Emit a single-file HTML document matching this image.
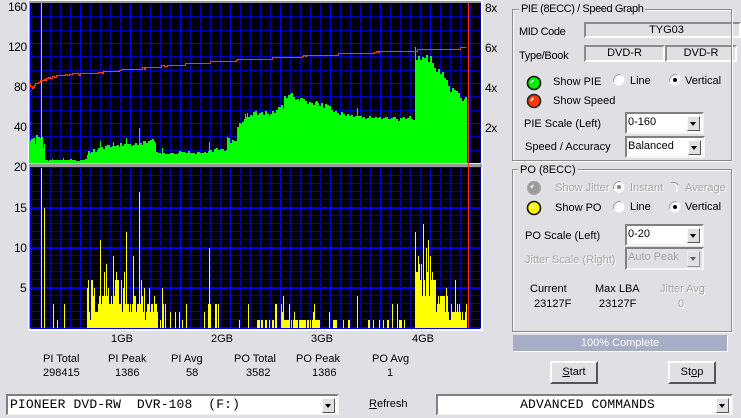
<!DOCTYPE html>
<html><head><meta charset="utf-8"><style>
html,body{margin:0;padding:0;background:#E0DFE3;width:741px;height:418px;overflow:hidden}
#p{position:relative;width:741px;height:418px;overflow:hidden;background:#E0DFE3}
.t{position:absolute;font:11px/14px "Liberation Sans",sans-serif;color:#000;white-space:nowrap}
.a{font-size:12px;letter-spacing:-.4px}
.d{color:#a4a4a6;text-shadow:1px 1px 0 #fff}
.g{position:absolute;border:1px solid #8a8a8c;box-shadow:1px 1px 0 #fff, inset 1px 1px 0 #fff}
.l{background:#E0DFE3;padding:0 2px}
.f{position:absolute;box-sizing:border-box;border:2px solid;border-color:#8c8c8c #fff #fff #8c8c8c;text-align:center;font:11px/13px "Liberation Sans",sans-serif}
.c{position:absolute;box-sizing:border-box;background:#fff;border:2px solid;border-color:#808080 #f4f4f4 #f4f4f4 #808080;font:11px/17px "Liberation Sans",sans-serif;padding-left:1px;white-space:nowrap;overflow:hidden}
.c i{position:absolute;right:2px;top:2px;bottom:1px;width:13px;box-sizing:border-box;background:#E0DFE3;border:1px solid;border-color:#f8f8f8 #555 #555 #f8f8f8}
.c i:after{content:"";position:absolute;left:2px;top:5px;border:3.5px solid transparent;border-top:4px solid #000;border-bottom:0}
.m{font-family:"Liberation Mono",monospace;font-size:13px;letter-spacing:.13px}
.b{position:absolute;box-sizing:border-box;width:48px;height:23px;background:#E0DFE3;border:2px solid;border-color:#fff #555 #555 #fff;text-align:center;font:11px/18px "Liberation Sans",sans-serif}
svg{position:absolute;left:0;top:0}
</style></head><body><div id="p">

<svg width="741" height="418" shape-rendering="crispEdges">
<rect x="28" y="0" width="455" height="331" fill="#fff"/>
<rect x="29" y="1" width="452" height="3" fill="#9a9a9a"/>
<rect x="29" y="1" width="1" height="328" fill="#9a9a9a"/>
<rect x="30" y="3" width="451" height="160" fill="#000"/>
<rect x="29" y="163" width="453" height="4" fill="#9a9a9a"/>
<rect x="29" y="163" width="453" height="1" fill="#e8e8e8"/>
<rect x="30" y="167" width="451" height="161" fill="#000"/>
<g fill="none" stroke-width="1" transform="translate(.5 .5)">
<path stroke="#0000b4" d="M30 16H480M30 30H480M30 56H480M30 70H480M30 96H480M30 110H480M30 136H480M30 150H480M30 175H480M30 183H480M30 191H480M30 199H480M30 215H480M30 223H480M30 231H480M30 239H480M30 255H480M30 263H480M30 271H480M30 279H480M30 295H480M30 303H480M30 311H480M30 319H480"/>
<path stroke="#0000b4" d="M40 3V162M50 3V162M60 3V162M70 3V162M90 3V162M100 3V162M110 3V162M120 3V162M140 3V162M150 3V162M160 3V162M170 3V162M190 3V162M200 3V162M210 3V162M220 3V162M240 3V162M250 3V162M260 3V162M270 3V162M290 3V162M300 3V162M310 3V162M320 3V162M340 3V162M350 3V162M360 3V162M370 3V162M390 3V162M400 3V162M410 3V162M420 3V162M440 3V162M450 3V162M460 3V162M470 3V162M480 3V162"/>
<path stroke="#0000b4" d="M40 167V327M50 167V327M60 167V327M70 167V327M90 167V327M100 167V327M110 167V327M120 167V327M140 167V327M150 167V327M160 167V327M170 167V327M190 167V327M200 167V327M210 167V327M220 167V327M240 167V327M250 167V327M260 167V327M270 167V327M290 167V327M300 167V327M310 167V327M320 167V327M340 167V327M350 167V327M360 167V327M370 167V327M390 167V327M400 167V327M410 167V327M420 167V327M440 167V327M450 167V327M460 167V327M470 167V327M480 167V327"/>
<path stroke="#0000f0" d="M30 3V162M80 3V162M130 3V162M180 3V162M230 3V162M280 3V162M330 3V162M380 3V162M430 3V162M30 167V327M80 167V327M130 167V327M180 167V327M230 167V327M280 167V327M330 167V327M380 167V327M430 167V327"/>
<path stroke="#0000f0" d="M30 43H480M30 83H480M30 123H480M30 167H480M30 207H480M30 247H480M30 287H480M30 327H480M30 208H480M30 248H480M30 288H480M30 328H480"/>
</g>
<path fill="#00ff00" d="M30 163V141H31V139H33V138H35V144H36V135H38V137H40V138H41V137H43V148H44V144H45V160H48V161H49V160H52V159H53V160H63V158H64V160H70V159H72V160H76V161H80V160H85V159H87V155H88V151H90V153H91V152H93V149H95V152H97V150H98V148H100V141H101V147H103V149H105V146H107V145H110V147H112V146H113V142H114V146H117V145H119V147H120V143H122V146H124V144H126V138H127V144H131V146H133V145H135V143H137V145H139V128H140V143H142V145H143V141H146V143H148V141H150V140H152V139H154V141H155V143H156V152H158V153H161V154H162V148H163V153H165V154H170V153H174V154H178V153H179V151H181V152H185V153H188V151H190V153H195V154H197V152H200V153H204V152H206V153H208V151H209V142H210V150H212V152H214V149H216V148H218V150H220V149H224V151H226V150H227V137H228V138H230V143H232V140H234V141H237V127H239V123H241V124H242V122H244V119H245V114H246V117H247V113H248V117H250V115H252V116H253V112H255V111H257V115H259V113H261V112H263V115H265V111H267V114H269V116H270V114H272V111H274V113H276V110H278V107H281V105H283V109H284V96H286V98H288V95H290V94H291V93H293V97H295V100H297V99H299V101H300V98H303V99H305V101H307V104H309V102H311V103H313V105H315V102H316V101H318V103H319V106H321V103H323V108H325V104H327V105H329V106H331V110H333V112H335V111H337V113H339V115H341V112H343V114H345V116H347V114H349V116H351V115H353V117H355V116H357V108H358V116H362V118H363V117H365V119H367V118H369V116H371V118H375V117H377V118H379V117H381V119H383V118H385V117H388V119H391V118H393V117H396V119H398V121H400V118H403V117H405V119H407V118H409V116H411V119H413V120H415V47H416V60H418V56H420V60H422V57H424V58H426V55H428V62H430V56H432V63H434V68H436V72H438V69H440V74H442V72H444V78H446V80H448V86H450V92H452V88H454V90H456V91H458V93H460V98H462V101H464V99H465V97H467V163Z"/>
<rect x="41" y="3" width="1" height="137" fill="#7cf07c"/>
<path fill="none" stroke="#ff3c00" stroke-width="1" transform="translate(.5 .5)" d="M30 83V86H32V88H33V87H34V85H35V83H38V82H40V80H44V79H45V80H46V78H48V77H50V78H52V76H54V77H56V75H65V74H67V75H69V74H72V73H78V74H79V75H80V73H98V72H102V73H103V71H119V70H121V69H142V67H144V69H145V67H161V65H164V66H167V65H185V63H210V61H236V60H237V59H272V57H302V56H303V55H305V56H306V55H338V53H374V52H376V51H378V52H379V51H417V49H460V47H466"/>
<rect x="468" y="3" width="1" height="325" fill="#ff3000"/>
<path fill="none" stroke="#ffff00" stroke-width="1" transform="translate(.5 0)" d="M41 328V168M44 328V208M53 328V304M57 328V320M64 328V304
M87 328V288M88 328V280M89 328V312M90 328V320M91 328V280M92 328V280M93 328V296M94 328V288M95 328V312M96 328V312M97 328V312M98 328V304M99 328V296M100 328V240M101 328V304M102 328V296M103 328V296M104 328V272M105 328V296M106 328V264M107 328V296M108 328V288M109 328V304M110 328V304M111 328V296M112 328V304M113 328V256M114 328V296M115 328V280M116 328V272M117 328V280M118 328V280M119 328V304M120 328V304M121 328V280M122 328V312M123 328V288M124 328V272M125 328V304M126 328V232M127 328V304M128 328V304M129 328V312M130 328V304M131 328V312M132 328V304M133 328V256M134 328V296M135 328V296M136 328V312M137 328V304M138 328V304M139 328V192M140 328V304M141 328V280M142 328V296M143 328V312M144 328V288M145 328V320M146 328V312M147 328V304M148 328V304M149 328V288M150 328V312M151 328V304M152 328V304M153 328V312M154 328V296M155 328V304M156 328V304M157 328V312
M160 328V320M162 328V288M163 328V304M165 328V304M170 328V312M175 328V312M179 328V312M182 328V320M186 328V304M204 328V312M208 328V304M209 328V248M210 328V304M215 328V304M216 328V304M218 328V304M239 328V320M248 328V304
M257 328V320M258 328V320M259 328V320M261 328V320M262 328V320M265 328V320M266 328V320M269 328V320M272 328V320M273 328V320M275 328V304M276 328V304M281 328V304M282 328V312M283 328V296M284 328V320M285 328V320M286 328V320M287 328V320M288 328V320M289 328V304M291 328V320M293 328V320M294 328V312M295 328V320M296 328V320M297 328V320M299 328V320M300 328V320M301 328V320M302 328V320M303 328V320M304 328V320M305 328V320M307 328V320M308 328V320M310 328V320M312 328V320M313 328V312M314 328V304M315 328V320M316 328V320M317 328V320M318 328V320M319 328V320M329 328V312M333 328V320M334 328V320M335 328V320M336 328V320M343 328V320M348 328V320M349 328V320M357 328V296M368 328V320M369 328V320M373 328V320M379 328V320M383 328V320M387 328V320M388 328V320M392 328V304M397 328V304M399 328V320M400 328V320M401 328V320M404 328V320
M415 328V232M416 328V272M417 328V272M418 328V256M419 328V264M420 328V280M421 328V264M422 328V296M423 328V224M424 328V280M425 328V296M426 328V248M427 328V272M428 328V240M429 328V296M430 328V256M431 328V280M432 328V272M433 328V280M434 328V280M435 328V280M436 328V312M437 328V304M438 328V296M439 328V304M440 328V296M441 328V296M442 328V296M443 328V296M444 328V296M445 328V312M446 328V288M447 328V296M448 328V312M449 328V320M450 328V320M451 328V304M452 328V312M453 328V312M454 328V312M455 328V280M456 328V312M457 328V304M458 328V312M459 328V304M460 328V312M461 328V320M462 328V312M463 328V320M464 328V320M465 328V312M466 328V304"/>
</svg>

<div class="t a" style="left:8px;top:0">160</div>
<div class="t a" style="left:8px;top:40px">120</div>
<div class="t a" style="left:14px;top:80px">80</div>
<div class="t a" style="left:14px;top:120px">40</div>
<div class="t a" style="left:14px;top:160px">20</div>
<div class="t a" style="left:14px;top:201px">15</div>
<div class="t a" style="left:14px;top:241px">10</div>
<div class="t a" style="left:20px;top:281px">5</div>
<div class="t a" style="left:485px;top:1px">8x</div>
<div class="t a" style="left:485px;top:41px">6x</div>
<div class="t a" style="left:485px;top:81px">4x</div>
<div class="t a" style="left:485px;top:121px">2x</div>

<div class="t" style="left:111px;top:332px">1GB</div>
<div class="t" style="left:211px;top:332px">2GB</div>
<div class="t" style="left:311px;top:332px">3GB</div>
<div class="t" style="left:412px;top:332px">4GB</div>

<div class="t" style="left:43px;top:352px">PI Total</div>
<div class="t" style="left:108px;top:352px">PI Peak</div>
<div class="t" style="left:171px;top:352px">PI Avg</div>
<div class="t" style="left:234px;top:352px">PO Total</div>
<div class="t" style="left:296px;top:352px">PO Peak</div>
<div class="t" style="left:372px;top:352px">PO Avg</div>
<div class="t" style="left:43px;top:366px">298415</div>
<div class="t" style="left:115px;top:366px">1386</div>
<div class="t" style="left:186px;top:366px">58</div>
<div class="t" style="left:246px;top:366px">3582</div>
<div class="t" style="left:312px;top:366px">1386</div>
<div class="t" style="left:387px;top:366px">1</div>

<!-- PIE group -->
<div class="f" style="left:584px;top:22px;width:157px;height:16px;padding-left:8px">TYG03</div>
<div class="f" style="left:584px;top:45px;width:81px;height:17px">DVD-R</div>
<div class="f" style="left:665px;top:45px;width:72px;height:17px">DVD-R</div>
<div class="g" style="left:512px;top:9px;width:218px;height:150px;background:transparent"></div>
<div class="t l" style="left:519px;top:2px;letter-spacing:-.4px">PIE (8ECC) / Speed Graph</div>
<div class="t" style="left:519px;top:25px;letter-spacing:-.4px">MID Code</div>
<div class="t" style="left:519px;top:49px;letter-spacing:-.3px">Type/Book</div>
<div class="t" style="left:553px;top:75px">Show PIE</div>
<div class="t" style="left:630px;top:74px">Line</div>
<div class="t" style="left:685px;top:74px">Vertical</div>
<div class="t" style="left:553px;top:94px">Show Speed</div>
<div class="t" style="left:524px;top:117px">PIE Scale (Left)</div>
<div class="t" style="left:525px;top:140px">Speed / Accuracy</div>
<div class="c" style="left:625px;top:112px;width:79px;height:22px">0-160<i></i></div>
<div class="c" style="left:625px;top:136px;width:80px;height:22px">Balanced<i></i></div>

<!-- PO group -->
<div class="g" style="left:512px;top:169px;width:218px;height:161px"></div>
<div class="t l" style="left:518px;top:163px">PO (8ECC)</div>
<div class="t d" style="left:555px;top:181px">Show Jitter</div>
<div class="t d" style="left:630px;top:181px">Instant</div>
<div class="t d" style="left:685px;top:181px">Average</div>
<div class="t" style="left:555px;top:201px">Show PO</div>
<div class="t" style="left:630px;top:200px">Line</div>
<div class="t" style="left:685px;top:200px">Vertical</div>
<div class="t" style="left:525px;top:229px">PO Scale (Left)</div>
<div class="t d" style="left:525px;top:253px">Jitter Scale (Right)</div>
<div class="c" style="left:625px;top:224px;width:79px;height:22px">0-20<i></i></div>
<div class="c" style="left:625px;top:247px;width:79px;height:23px;background:#E0DFE3;color:#a4a4a6">Auto Peak<i style="opacity:.55"></i></div>
<div class="t" style="left:530px;top:282px">Current</div>
<div class="t" style="left:595px;top:282px">Max LBA</div>
<div class="t d" style="left:660px;top:282px">Jitter Avg</div>
<div class="t" style="left:534px;top:297px">23127F</div>
<div class="t" style="left:599px;top:297px">23127F</div>
<div class="t d" style="left:678px;top:297px">0</div>

<svg width="741" height="418">
<defs>
<g id="r"><circle r="5.5" fill="#fff"/><path d="M-5 2A5.5 5.5 0 0 1 2-5" fill="none" stroke="#9a9a9a" stroke-width="1"/></g>
<g id="k"><path d="M-3.2-.2L-.5-3" stroke="#fff" stroke-width="1.6" fill="none"/></g>
</defs>
<circle cx="534" cy="83" r="6.5" fill="#00f000" stroke="#111" stroke-width="1.6"/><use href="#k" x="534" y="83"/>
<circle cx="534" cy="101" r="6.5" fill="#ff3c00" stroke="#222" stroke-width="1.6"/><use href="#k" x="534" y="101"/>
<circle cx="534" cy="188" r="6.5" fill="#9a9a9a" stroke="#a8a8a8" stroke-width="1.2"/><use href="#k" x="534" y="188"/>
<circle cx="534" cy="208" r="6.5" fill="#ffff00" stroke="#111" stroke-width="1.6"/><use href="#k" x="534" y="208"/>
<use href="#r" x="619" y="80"/>
<use href="#r" x="675" y="80"/><circle cx="675" cy="80" r="2" fill="#000"/>
<use href="#r" x="619" y="187"/><circle cx="619" cy="187" r="2" fill="#808080"/>
<path d="M671 183A5.5 5.5 0 0 1 676 192" fill="none" stroke="#fff" stroke-width="1.5"/>
<path d="M671 183A5.5 5.5 0 0 1 678 185" fill="none" stroke="#8a8a8a" stroke-width="1"/>
<use href="#r" x="619" y="207"/>
<use href="#r" x="675" y="207"/><circle cx="675" cy="207" r="2" fill="#000"/>
</svg>

<div style="position:absolute;left:513px;top:335px;width:214px;height:16px;background:#A6AEC6;color:#fff;text-align:center;font:11px/16px 'Liberation Sans',sans-serif;box-shadow:1px 1px 0 #fff">100% Complete</div>
<div class="b" style="left:550px;top:361px"><u>S</u>tart</div>
<div class="b" style="left:668px;top:361px">St<u>o</u>p</div>

<div class="c m" style="left:6px;top:394px;width:333px;height:21px;padding-left:2px;line-height:17px;white-space:pre;border-bottom-width:1px">PIONEER DVD-RW  DVR-108  (F:)<i></i></div>
<div class="t" style="left:369px;top:397px"><u>R</u>efresh</div>
<div class="c m" style="left:436px;top:394px;width:297px;height:21px;text-align:center;padding-left:6px;line-height:17px;border-bottom-width:1px">ADVANCED COMMANDS<i></i></div>

</div></body></html>
